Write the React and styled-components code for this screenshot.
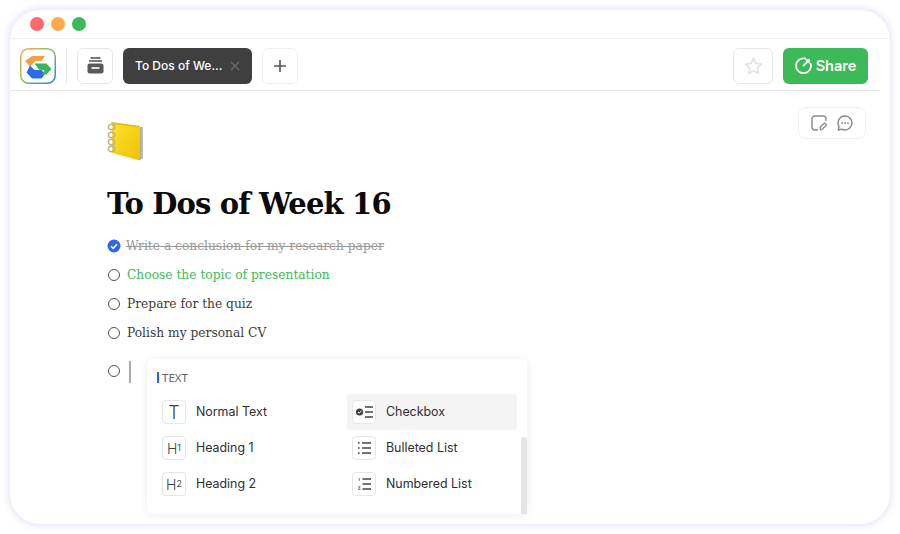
import React from "react";
import styled, { createGlobalStyle } from "styled-components";

const GlobalStyle = createGlobalStyle`
  html, body { margin: 0; padding: 0; background: #fff; }
  body { font-family: Inter, "Noto Sans", sans-serif; }
  * { box-sizing: border-box; }
`;

const Page = styled.div`
  width: 900px;
  height: 534px;
  padding: 10px;
  overflow: hidden;
  background: #fff;
`;

const Window = styled.div`
  width: 880px;
  height: 514px;
  border-radius: 30px;
  background: #fff;
  box-shadow: 0 0 6px 2px rgba(205, 208, 240, 0.55);
  display: flex;
  flex-direction: column;
`;

const TitleBar = styled.div`
  height: 29px;
  flex: none;
  display: flex;
  align-items: center;
  gap: 7px;
  padding: 0 0 0 20px;
  border-bottom: 1px solid #f0f0f2;
`;

const Dot = styled.span`
  width: 14px;
  height: 14px;
  border-radius: 50%;
  background: ${(p) => p.$color};
`;

const Toolbar = styled.div`
  height: 52px;
  flex: none;
  margin-right: 10px;
  padding: 2px 12px 0 10px;
  display: flex;
  align-items: center;
  border-bottom: 1px solid #e9e9ec;
`;

const Divider = styled.span`
  width: 1px;
  height: 36px;
  margin: 0 10px;
  background: #e6e6e6;
`;

const IconButton = styled.button`
  width: ${(p) => p.$width || 36}px;
  height: 36px;
  padding: 0;
  margin-left: ${(p) => p.$left || 0}px;
  flex: none;
  display: flex;
  align-items: center;
  justify-content: center;
  background: #fff;
  border: 1px solid ${(p) => p.$border || "#e8e8e8"};
  border-radius: 6px;
`;

const Tab = styled.div`
  width: 129px;
  height: 36px;
  margin-left: 10px;
  padding: 0 12px;
  display: flex;
  align-items: center;
  justify-content: space-between;
  background: #3f3f3f;
  border-radius: 6px;
  color: #fff;
  font-size: 12px;
  font-weight: 500;
  white-space: nowrap;
`;

const Spacer = styled.div`
  flex-grow: 1;
`;

const ShareButton = styled.button`
  width: 85px;
  height: 36px;
  margin-left: 10px;
  padding: 0;
  display: flex;
  align-items: center;
  justify-content: center;
  gap: 4px;
  border: 0;
  border-radius: 6px;
  background: #3dba58;
  color: #fff;
  font-family: Inter, sans-serif;
  font-size: 14.5px;
  font-weight: 600;
`;

const Body = styled.div`
  flex: 1;
  padding: 16px 24px 0 97px;
  display: flex;
  flex-direction: column;
  position: relative;
`;

const NoteTools = styled.div`
  position: absolute;
  top: 16px;
  right: 24px;
  width: 68px;
  height: 32px;
  display: flex;
  align-items: center;
  justify-content: center;
  gap: 10px;
  border: 1px solid #f1f1f1;
  border-radius: 8px;
`;

const Cover = styled.div`
  width: 40px;
  height: 42px;
  margin-top: 14px;
`;

const Title = styled.h1`
  margin: 20px 0 0;
  height: 42px;
  line-height: 42px;
  font-family: "DejaVu Serif", serif;
  font-size: 29px;
  font-weight: 700;
  letter-spacing: -0.85px;
  color: #0b0b0b;
  white-space: nowrap;
`;

const TodoList = styled.div`
  margin-top: 7px;
  display: flex;
  flex-direction: column;
`;

const Todo = styled.div`
  height: ${(p) => p.$height || 29}px;
  display: flex;
  align-items: center;
  gap: ${(p) => (p.$gap ? p.$gap : 7)}px;
  position: relative;
  margin-top: ${(p) => p.$top || 0}px;
  font-family: "DejaVu Serif", serif;
  font-size: 12.25px;
  color: ${(p) => p.$color || "#3c3c3c"};
  text-decoration: ${(p) => (p.$done ? "line-through" : "none")};
`;

const Radio = styled.span`
  width: 12px;
  height: 12px;
  flex: none;
  margin-left: 1px;
  border: 1.2px solid #505050;
  border-radius: 50%;
`;

const Caret = styled.span`
  width: 1.5px;
  height: 22px;
  margin: 2px 0 0 2px;
  background: #aaa;
`;

const Popover = styled.div`
  position: absolute;
  left: 40px;
  top: 3px;
  width: 380px;
  height: 155px;
  padding: 13px 10px 0;
  background: #fff;
  border-radius: 6px;
  box-shadow: 0 1px 10px rgba(0, 0, 0, 0.08);
`;

const SectionLabel = styled.div`
  height: 11px;
  padding-left: 3px;
  border-left: 2px solid #2a62f0;
  display: flex;
  align-items: center;
  font-family: "Noto Sans", sans-serif;
  font-size: 11.5px;
  color: #666;
`;

const MenuGrid = styled.div`
  margin-top: 11px;
  display: grid;
  grid-template-columns: 170px 170px;
  column-gap: 20px;
  grid-auto-rows: 36px;
`;

const MenuItem = styled.div`
  padding-left: 5px;
  display: flex;
  align-items: center;
  gap: 10px;
  border-radius: 4px;
  background: ${(p) => (p.$active ? "#f4f4f4" : "transparent")};
`;

const MenuLabel = styled.span`
  margin-bottom: 2px;
  font-family: Inter, sans-serif;
  font-size: 12.4px;
  font-weight: 400;
  color: #2e2e2e;
`;

const MenuIcon = styled.span`
  width: 24px;
  height: 24px;
  flex: none;
  display: flex;
  align-items: center;
  justify-content: center;
  background: #fff;
  border: 1px solid #e6e6e6;
  border-radius: 4px;
  color: #444;
  font-family: Inter, sans-serif;
  font-size: ${(p) => p.$size || 14}px;
  font-weight: 300;
`;

const Sub = styled.sub`
  font-size: 9px;
  font-weight: 400;
  vertical-align: -2px;
  line-height: 0;
`;

const ScrollBar = styled.div`
  position: absolute;
  right: 0;
  bottom: 0;
  width: 6px;
  height: 77px;
  background: #e5e5e5;
  border-radius: 3px 3px 0 0;
`;

const Logo = () => (
  <svg width="36" height="36" viewBox="0 0 36 36">
    <defs>
      <linearGradient id="ring" x1="0" y1="0" x2="1" y2="1">
        <stop offset="0" stopColor="#f5a94f" />
        <stop offset="0.45" stopColor="#97bf63" />
        <stop offset="1" stopColor="#2a7bea" />
      </linearGradient>
    </defs>
    <rect x="0.75" y="0.75" width="34.5" height="34.5" rx="8" fill="#fff" stroke="url(#ring)" strokeWidth="1.5" />
    <polygon points="12,8 25,8 21.5,13 15.5,13 12,16.5 10.5,19 5,13" fill="#f7a043" />
    <polygon points="10,17.5 14.5,22 21.5,22 25,26 21.5,30.5 12,30.5 6.5,24.5" fill="#2a6bea" />
    <polygon points="14.5,15.5 26.5,15.5 31.5,21 26.5,26.5 21.5,26.5 24.5,22.5 19,21.5" fill="#3db556" />
  </svg>
);

const Notebook = () => (
  <svg width="38" height="40" viewBox="0 0 38 40">
    <defs>
      <linearGradient id="cover" x1="0" y1="0" x2="1" y2="1">
        <stop offset="0" stopColor="#ffe327" />
        <stop offset="1" stopColor="#efbf05" />
      </linearGradient>
    </defs>
    <path d="M6 2.5L36 6.5 36 38 33 38z" fill="#c9cdbf" />
    <path d="M4 1l29 4-1 2-26-3z" fill="#e3b90d" />
    <path d="M5 3l28 3.5V39.5L5 32z" fill="url(#cover)" />
    <path d="M33 6.5l2.5-1V37l-2.5 2.5z" fill="#aeb3a6" />
    {[6, 14, 21, 28].map((y) => (
      <ellipse key={y} cx="4.5" cy={y} rx="3.2" ry="2.8" fill="none" stroke="#b7b38c" strokeWidth="1.4" />
    ))}
  </svg>
);

const CheckedRadio = () => (
  <svg width="14" height="14" viewBox="0 0 14 14" style={{ flex: "none" }}>
    <circle cx="7" cy="7" r="6.5" fill="#2f66ef" />
    <path d="M4 7.2l2.1 2.1L10 5.2" fill="none" stroke="#fff" strokeWidth="1.6" />
  </svg>
);

const lines = { stroke: "#444", strokeWidth: 1.3, fill: "none" };

const CheckboxIcon = () => (
  <svg width="17" height="12" viewBox="0 0 17 12">
    <circle cx="3.6" cy="6" r="3.6" fill="#444" />
    <path d="M2 6l1.2 1.2L5.4 4.8" fill="none" stroke="#fff" strokeWidth="1" />
    <path d="M9 1h8M9 6h8M9 11h8" {...lines} />
  </svg>
);

const BulletIcon = () => (
  <svg width="13" height="12" viewBox="0 0 13 12">
    <path d="M4 1h9M4 6h9M4 11h9" {...lines} />
    <path d="M0 1h1.6M0 6h1.6M0 11h1.6" {...lines} />
  </svg>
);

const NumberIcon = () => (
  <svg width="13" height="12" viewBox="0 0 13 12">
    <path d="M4.5 1h8.5M4.5 6h8.5M4.5 11h8.5" {...lines} />
    <path d="M1.2 0v3M0 8.8h2.2L0.2 11.4h2.4" stroke="#444" strokeWidth="0.7" fill="none" />
  </svg>
);

const Archive = () => (
  <svg width="17" height="17" viewBox="0 0 17 17" fill="none">
    <path d="M3.5 1h10" stroke="#595959" strokeWidth="1.6" />
    <path d="M2 4h13" stroke="#595959" strokeWidth="1.6" />
    <rect x="0.5" y="6.5" width="16" height="10" rx="2" fill="#595959" />
    <path d="M4.5 11h8" stroke="#fff" strokeWidth="1.6" />
  </svg>
);

const Plus = () => (
  <svg width="12" height="12" viewBox="0 0 12 12">
    <path d="M6 0v12M0 6h12" stroke="#555" strokeWidth="1.6" />
  </svg>
);

const Close = () => (
  <svg width="10" height="10" viewBox="0 0 10 10">
    <path d="M1 1l8 8M9 1l-8 8" stroke="#6b6b6b" strokeWidth="1.4" />
  </svg>
);

const Star = () => (
  <svg width="19" height="18" viewBox="0 0 19 18">
    <path
      d="M9.5 1.5l2.4 4.9 5.4.8-3.9 3.8.9 5.4-4.8-2.5-4.8 2.5.9-5.4-3.9-3.8 5.4-.8z"
      fill="none"
      stroke="#e4e4e4"
      strokeWidth="1.8"
      strokeLinejoin="round"
    />
  </svg>
);

const ShareIcon = () => (
  <svg width="17" height="17" viewBox="0 0 16 16" fill="none">
    <path d="M9.5 1.4A7 7 0 1 0 14.8 6.5" stroke="#fff" strokeWidth="1.7" strokeLinecap="round" />
    <path d="M7.5 8.5L12 4" stroke="#fff" strokeWidth="1.7" />
    <path d="M9.3 2.2L14 2l-.2 4.7z" fill="#fff" />
  </svg>
);

const NoteIcon = () => (
  <svg width="16" height="16" viewBox="0 0 16 16" fill="none">
    <path
      d="M7 15H3.5A2.5 2.5 0 0 1 1 12.5v-9A2.5 2.5 0 0 1 3.5 1h9A2.5 2.5 0 0 1 15 3.5V6"
      stroke="#8a8a8a"
      strokeWidth="1.4"
    />
    <path d="M9.5 15l-.5-2.5L13.5 8l2 2-4.5 4.5z" stroke="#8a8a8a" strokeWidth="1.3" strokeLinejoin="round" />
  </svg>
);

const ChatIcon = () => (
  <svg width="16" height="16" viewBox="0 0 16 16" fill="none">
    <path d="M8 1a7 7 0 1 1-3.3 13.2L1.2 15l.9-3.3A7 7 0 0 1 8 1z" stroke="#8a8a8a" strokeWidth="1.4" strokeLinejoin="round" />
    <circle cx="5" cy="8" r="0.9" fill="#8a8a8a" />
    <circle cx="8" cy="8" r="0.9" fill="#8a8a8a" />
    <circle cx="11" cy="8" r="0.9" fill="#8a8a8a" />
  </svg>
);

const App = () => {
  return (
    <Page>
      <GlobalStyle />
      <Window>
        <TitleBar>
          <Dot $color="#fe6a6c" />
          <Dot $color="#fdab4a" />
          <Dot $color="#3dba58" />
        </TitleBar>
        <Toolbar>
          <Logo />
          <Divider />
          <IconButton>
            <Archive />
          </IconButton>
          <Tab>
            To Dos of We...
            <Close />
          </Tab>
          <IconButton $left={10} $border="#f1f1f1">
            <Plus />
          </IconButton>
          <Spacer />
          <IconButton $width={40}>
            <Star />
          </IconButton>
          <ShareButton>
            <ShareIcon />
            Share
          </ShareButton>
        </Toolbar>
        <Body>
          <NoteTools>
            <NoteIcon />
            <ChatIcon />
          </NoteTools>
          <Cover>
            <Notebook />
          </Cover>
          <Title>To Dos of Week 16</Title>
          <TodoList>
            <Todo $height={28} $gap={5} $color="#9a9a9a" $done>
              <CheckedRadio />
              Write a conclusion for my research paper
            </Todo>
            <Todo $color="#3dba58">
              <Radio />
              Choose the topic of presentation
            </Todo>
            <Todo>
              <Radio />
              Prepare for the quiz
            </Todo>
            <Todo>
              <Radio />
              Polish my personal CV
            </Todo>
            <Todo $top={9}>
              <Radio />
              <Caret />
              <Popover>
                <SectionLabel>TEXT</SectionLabel>
                <MenuGrid>
                  <MenuItem>
                    <MenuIcon $size={18}>T</MenuIcon>
                    <MenuLabel>Normal Text</MenuLabel>
                  </MenuItem>
                  <MenuItem $active>
                    <MenuIcon>
                      <CheckboxIcon />
                    </MenuIcon>
                    <MenuLabel>Checkbox</MenuLabel>
                  </MenuItem>
                  <MenuItem>
                    <MenuIcon>
                      H<Sub>1</Sub>
                    </MenuIcon>
                    <MenuLabel>Heading 1</MenuLabel>
                  </MenuItem>
                  <MenuItem>
                    <MenuIcon>
                      <BulletIcon />
                    </MenuIcon>
                    <MenuLabel>Bulleted List</MenuLabel>
                  </MenuItem>
                  <MenuItem>
                    <MenuIcon>
                      H<Sub>2</Sub>
                    </MenuIcon>
                    <MenuLabel>Heading 2</MenuLabel>
                  </MenuItem>
                  <MenuItem>
                    <MenuIcon>
                      <NumberIcon />
                    </MenuIcon>
                    <MenuLabel>Numbered List</MenuLabel>
                  </MenuItem>
                </MenuGrid>
                <ScrollBar />
              </Popover>
            </Todo>
          </TodoList>
        </Body>
      </Window>
    </Page>
  );
};

export default App;
